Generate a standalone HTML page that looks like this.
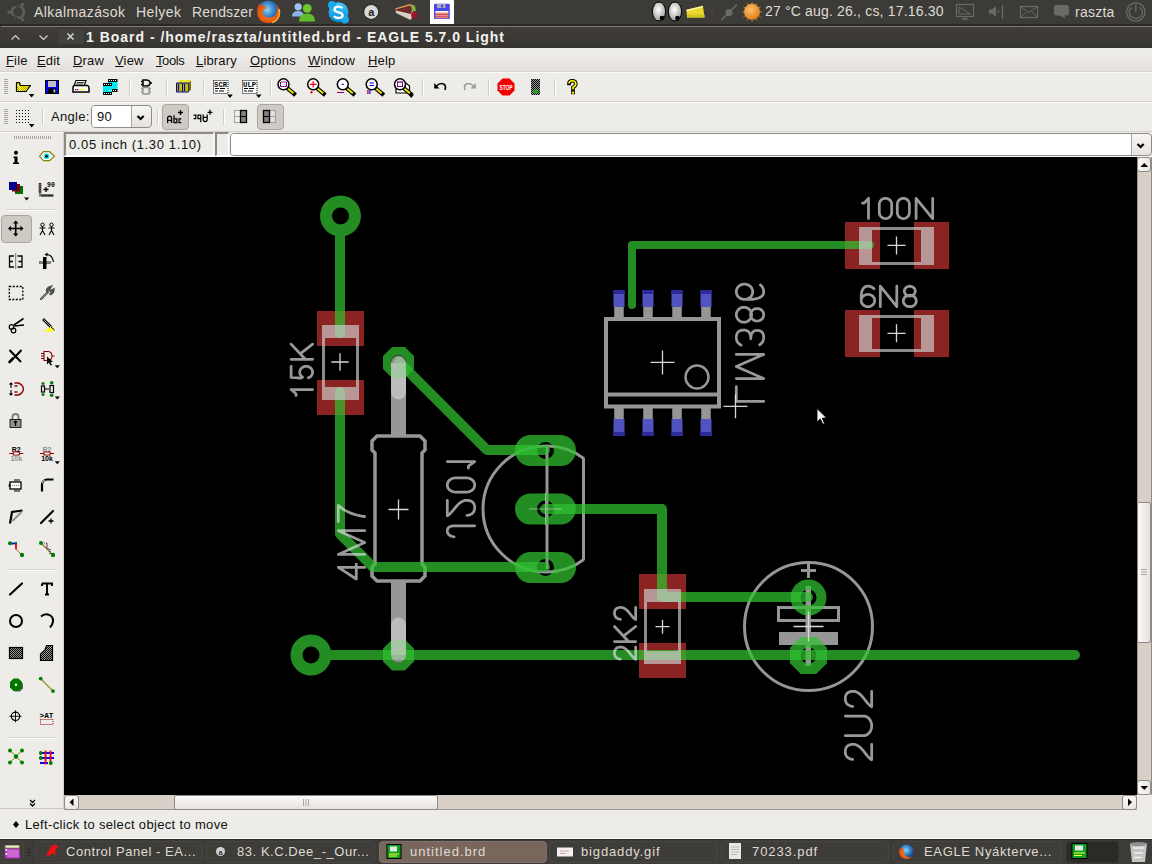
<!DOCTYPE html>
<html><head><meta charset="utf-8">
<style>
*{margin:0;padding:0;box-sizing:border-box}
html,body{width:1152px;height:864px;overflow:hidden;background:#edece8;font-family:"Liberation Sans",sans-serif;font-size:13px;color:#000}
.a{position:absolute}
.t{position:absolute;white-space:nowrap;line-height:13px}
.pt{color:#dfdbd2;font-size:14px;letter-spacing:0.42px}
.mt{font-size:13px;letter-spacing:0.15px;color:#101010}
.tt{color:#dfdbd2;font-size:13px;letter-spacing:0.55px}
.sep{position:absolute;width:2px;border-left:1px solid #c9c6c0;border-right:1px solid #fff}
.hsep{position:absolute;height:2px;border-top:1px solid #c9c6c0;border-bottom:1px solid #fff}
.task{position:absolute;top:841px;height:22px;border:1px solid #464541;border-radius:4px;background:#3e3d39}
</style></head><body>
<!-- ===== top panel ===== -->
<div class="a" style="left:0;top:0;width:1152px;height:24px;background:#3c3b37"></div>
<div class="t pt" style="left:34px;top:5.5px">Alkalmazások</div>
<div class="t pt" style="left:136px;top:5.5px">Helyek</div>
<div class="t pt" style="left:192px;top:5.5px;letter-spacing:0.15px">Rendszer</div>
<div class="t pt" style="left:765px;top:4.5px;letter-spacing:0.175px">27 °C aug. 26., cs, 17.16.30</div>
<div class="t pt" style="left:1075px;top:5.5px;letter-spacing:0.25px">raszta</div>
<!-- ===== title bar ===== -->
<div class="a" style="left:0;top:24px;width:1152px;height:2px;background:#2a2926"></div>
<div class="a" style="left:0;top:26px;width:1152px;height:1px;background:#7d7b76"></div><div class="a" style="left:0;top:26px;width:1px;height:1px;background:#3a3935"></div>
<div class="a" style="left:0;top:27px;width:1152px;height:21px;background:linear-gradient(#403d39,#3b3935 60%,#34332f)"></div>
<div class="t" style="left:86px;top:31px;font-weight:bold;font-size:14px;letter-spacing:0.985px;color:#f4f2ee">1 Board - /home/raszta/untitled.brd - EAGLE 5.7.0 Light</div>
<!-- ===== menu bar ===== -->
<div class="a" style="left:0;top:48px;width:1152px;height:24px;background:linear-gradient(#eeede9,#edebe7 40%,#e3e0db)"></div>
<div class="a" style="left:0;top:71px;width:1152px;height:1px;background:#d8d5cf"></div>
<div class="t mt" style="left:6px;top:54px"><u>F</u>ile</div>
<div class="t mt" style="left:37px;top:54px"><u>E</u>dit</div>
<div class="t mt" style="left:73px;top:54px"><u>D</u>raw</div>
<div class="t mt" style="left:115px;top:54px"><u>V</u>iew</div>
<div class="t mt" style="left:156px;top:54px;letter-spacing:-0.4px"><u>T</u>ools</div>
<div class="t mt" style="left:196px;top:54px"><u>L</u>ibrary</div>
<div class="t mt" style="left:250px;top:54px"><u>O</u>ptions</div>
<div class="t mt" style="left:308px;top:54px"><u>W</u>indow</div>
<div class="t mt" style="left:368px;top:54px"><u>H</u>elp</div>
<!-- ===== toolbars ===== -->
<div class="a" style="left:0;top:72px;width:1152px;height:1px;background:#fbfaf9"></div>
<div class="a" style="left:0;top:101px;width:1152px;height:1px;background:#d3d0ca"></div>
<div class="a" style="left:0;top:102px;width:1152px;height:1px;background:#fbfaf9"></div>
<div class="a" style="left:0;top:131px;width:1152px;height:1px;background:#d3d0ca"></div>
<div class="a" style="left:0;top:132px;width:63px;height:1px;background:#fbfaf9"></div>
<!-- pressed buttons -->
<div class="a" style="left:1px;top:215px;width:31px;height:28px;background:#cfcac4;border:1px solid #aaa59f;border-radius:4px"></div>
<div class="a" style="left:162px;top:104px;width:27px;height:26px;background:#cfcac4;border:1px solid #aaa59f;border-radius:4px"></div>
<div class="a" style="left:257px;top:104px;width:27px;height:26px;background:#cfcac4;border:1px solid #aaa59f;border-radius:4px"></div>
<!-- combobox angle -->
<div class="a" style="left:91px;top:105px;width:61px;height:23px;border:1px solid #8f8c87;border-radius:4px;background:linear-gradient(#f7f6f4,#e6e3df);overflow:hidden">
  <div class="a" style="left:0;top:0;width:40px;height:21px;background:#fff;border-right:1px solid #a9a6a1"></div>
</div>
<div class="t mt" style="left:97px;top:110px;letter-spacing:0.3px">90</div>
<!-- coordinate row -->
<div class="a" style="left:64px;top:132px;width:150px;height:24px;background:#edece8;border-top:2px solid #8e8b86;border-left:2px solid #8e8b86;border-right:1px solid #fff;border-bottom:1px solid #fff"></div>
<div class="t mt" style="left:69px;top:138px;letter-spacing:0.64px">0.05 inch (1.30 1.10)</div>
<div class="a" style="left:215px;top:132px;width:14px;height:24px;background:#edece8;border-top:2px solid #8e8b86;border-left:2px solid #8e8b86;border-right:1px solid #fff;border-bottom:1px solid #fff"></div>
<div class="a" style="left:230px;top:133px;width:922px;height:23px;border:1px solid #8f8c87;border-radius:4px;background:linear-gradient(#f7f6f4,#e6e3df);overflow:hidden">
  <div class="a" style="left:0;top:0;width:901px;height:21px;background:#fff;border-right:1px solid #a9a6a1"></div>
</div>
<div class="a" style="left:64px;top:156px;width:1088px;height:1px;background:#fbfaf9"></div>
<!-- left toolbar frame -->
<div class="a" style="left:63px;top:132px;width:1px;height:678px;background:#d6d3cd"></div>
<div class="a" style="left:0;top:808px;width:64px;height:1px;background:#c9c5bf"></div>
<!-- scrollbars -->
<div class="a" style="left:1137px;top:157px;width:15px;height:638px;background:#d8cfc7;border-left:1px solid #9e9790"></div>
<div class="a" style="left:1137px;top:157px;width:14px;height:15px;border:1px solid #8f8a84;border-radius:3px;background:linear-gradient(90deg,#fbfaf9,#e9e6e2)"></div>
<div class="a" style="left:1137px;top:780px;width:14px;height:15px;border:1px solid #8f8a84;border-radius:3px;background:linear-gradient(90deg,#fbfaf9,#e9e6e2)"></div>
<div class="a" style="left:1137px;top:502px;width:14px;height:141px;border:1px solid #8f8a84;border-radius:2px;background:linear-gradient(90deg,#fbfaf9,#e6e3de)"></div>
<div class="a" style="left:1151px;top:157px;width:1px;height:638px;background:#8f8a84"></div>
<div class="a" style="left:64px;top:795px;width:1073px;height:15px;background:#d8cfc7;border-bottom:1px solid #9e9790"></div>
<div class="a" style="left:64px;top:795px;width:15px;height:15px;border:1px solid #8f8a84;border-radius:3px;background:linear-gradient(#fbfaf9,#e9e6e2)"></div>
<div class="a" style="left:1122px;top:795px;width:15px;height:15px;border:1px solid #8f8a84;border-radius:3px;background:linear-gradient(#fbfaf9,#e9e6e2)"></div>
<div class="a" style="left:174px;top:795px;width:264px;height:15px;border:1px solid #8f8a84;border-radius:2px;background:linear-gradient(#fbfaf9,#e6e3de)"></div>

<div class="t mt" style="left:51px;top:110px;letter-spacing:0.3px">Angle:</div>
<!-- ===== canvas ===== -->
<svg class="a" style="left:64px;top:157px" width="1073" height="638" viewBox="64 157 1073 638">
<rect x="64" y="157" width="1073" height="638" fill="#000"/>
<rect x="317" y="311" width="47" height="35" fill="#8c2323"/>
<rect x="317" y="380" width="47" height="35" fill="#8c2323"/>
<rect x="639" y="574" width="47" height="35" fill="#8c2323"/>
<rect x="639" y="643" width="47" height="35" fill="#8c2323"/>
<rect x="845" y="222" width="35" height="47" fill="#8c2323"/>
<rect x="914" y="222" width="35" height="47" fill="#8c2323"/>
<rect x="845" y="310" width="35" height="47" fill="#8c2323"/>
<rect x="914" y="310" width="35" height="47" fill="#8c2323"/>
<rect x="613.5" y="290" width="11" height="17" fill="#5252c2"/>
<rect x="613.5" y="290" width="11" height="4" fill="#2b2b9c"/>
<rect x="613.5" y="419" width="11" height="17" fill="#5252c2"/>
<rect x="613.5" y="432" width="11" height="4" fill="#2b2b9c"/>
<rect x="614.25" y="307" width="9.5" height="10" fill="#969696"/>
<rect x="614.25" y="408" width="9.5" height="11" fill="#969696"/>
<rect x="642.5" y="290" width="11" height="17" fill="#5252c2"/>
<rect x="642.5" y="290" width="11" height="4" fill="#2b2b9c"/>
<rect x="642.5" y="419" width="11" height="17" fill="#5252c2"/>
<rect x="642.5" y="432" width="11" height="4" fill="#2b2b9c"/>
<rect x="643.25" y="307" width="9.5" height="10" fill="#969696"/>
<rect x="643.25" y="408" width="9.5" height="11" fill="#969696"/>
<rect x="671.5" y="290" width="11" height="17" fill="#5252c2"/>
<rect x="671.5" y="290" width="11" height="4" fill="#2b2b9c"/>
<rect x="671.5" y="419" width="11" height="17" fill="#5252c2"/>
<rect x="671.5" y="432" width="11" height="4" fill="#2b2b9c"/>
<rect x="672.25" y="307" width="9.5" height="10" fill="#969696"/>
<rect x="672.25" y="408" width="9.5" height="11" fill="#969696"/>
<rect x="700.5" y="290" width="11" height="17" fill="#5252c2"/>
<rect x="700.5" y="290" width="11" height="4" fill="#2b2b9c"/>
<rect x="700.5" y="419" width="11" height="17" fill="#5252c2"/>
<rect x="700.5" y="432" width="11" height="4" fill="#2b2b9c"/>
<rect x="701.25" y="307" width="9.5" height="10" fill="#969696"/>
<rect x="701.25" y="408" width="9.5" height="11" fill="#969696"/>
<rect x="606" y="319" width="113" height="87.5" fill="none" stroke="#969696" stroke-width="4"/>
<line x1="606" y1="394.5" x2="719" y2="394.5" stroke="#969696" stroke-width="4"/>
<circle cx="697" cy="377" r="11.5" fill="none" stroke="#969696" stroke-width="2.5"/>
<rect x="391" y="363" width="15" height="72" fill="#969696"/>
<rect x="391" y="581" width="15" height="74" fill="#969696"/>
<path d="M372,441 L377,436 L420,436 L425,441 L425,450 L422,453 L422,564 L425,567 L425,576 L420,581 L377,581 L372,576 L372,567 L375,564 L375,453 L372,450 Z" fill="none" stroke="#969696" stroke-width="3.5"/>
<clipPath id="tc"><rect x="400" y="400" width="184.5" height="220"/></clipPath>
<circle cx="546" cy="509" r="63" fill="none" stroke="#969696" stroke-width="3" clip-path="url(#tc)"/>
<line x1="583.5" y1="458" x2="583.5" y2="560" stroke="#969696" stroke-width="3"/>
<line x1="547" y1="446" x2="547" y2="569" stroke="#969696" stroke-width="3"/>
<circle cx="808.5" cy="626.5" r="64" fill="none" stroke="#969696" stroke-width="3"/>
<rect x="778.5" y="607.5" width="60" height="13" fill="none" stroke="#969696" stroke-width="3"/>
<rect x="779" y="632" width="59" height="13" fill="#969696"/>
<path d="M801,570.5 L816,570.5 M808.5,564 L808.5,578" stroke="#969696" stroke-width="3"/>
<rect x="805.5" y="586" width="5.5" height="80" fill="#969696"/>
<g fill="none" stroke="rgba(48,192,48,0.73)" stroke-width="10" stroke-linecap="round" stroke-linejoin="round"><path d="M340,230 L340,333 M340,392 L340,534 L373,567 L545,567" /><path d="M331,655 L1075,655" /><path d="M399,362 L487,450 L545,450" /><path d="M545,509 L662,509 L662,597 L808,597" /></g>
<path d="M632,305 L632,245 L870,245" fill="none" stroke="rgba(48,192,48,0.73)" stroke-width="8" stroke-linecap="round" stroke-linejoin="round"/>
<path d="M320.0,216 a20.5,20.5 0 1,0 41.0,0 a20.5,20.5 0 1,0 -41.0,0 Z M332.0,216 a8.5,8.5 0 1,1 17.0,0 a8.5,8.5 0 1,1 -17.0,0 Z" fill-rule="evenodd" fill="#238c23"/>
<path d="M290.5,655 a20.5,20.5 0 1,0 41.0,0 a20.5,20.5 0 1,0 -41.0,0 Z M302.5,655 a8.5,8.5 0 1,1 17.0,0 a8.5,8.5 0 1,1 -17.0,0 Z" fill-rule="evenodd" fill="#238c23"/>
<path d="M392.1,347.0 L404.9,347.0 L414.0,356.1 L414.0,368.9 L404.9,378.0 L392.1,378.0 L383.0,368.9 L383.0,356.1 Z M391.0,362.5 a7.5,7.5 0 1,1 15.0,0 a7.5,7.5 0 1,1 -15.0,0 Z" fill-rule="evenodd" fill="rgba(48,192,48,0.73)"/>
<path d="M392.1,639.5 L404.9,639.5 L414.0,648.6 L414.0,661.4 L404.9,670.5 L392.1,670.5 L383.0,661.4 L383.0,648.6 Z M391.0,655 a7.5,7.5 0 1,1 15.0,0 a7.5,7.5 0 1,1 -15.0,0 Z" fill-rule="evenodd" fill="rgba(48,192,48,0.73)"/>
<path d="M530.5,435.0 L560.5,435.0 A15.5,15.5 0 0,1 560.5,466.0 L530.5,466.0 A15.5,15.5 0 0,1 530.5,435.0 Z M537.0,450.5 a8.5,8.5 0 1,1 17.0,0 a8.5,8.5 0 1,1 -17.0,0 Z" fill-rule="evenodd" fill="rgba(48,192,48,0.73)"/>
<path d="M530.5,493.5 L560.5,493.5 A15.5,15.5 0 0,1 560.5,524.5 L530.5,524.5 A15.5,15.5 0 0,1 530.5,493.5 Z M537.0,509 a8.5,8.5 0 1,1 17.0,0 a8.5,8.5 0 1,1 -17.0,0 Z" fill-rule="evenodd" fill="rgba(48,192,48,0.73)"/>
<path d="M530.5,552.0 L560.5,552.0 A15.5,15.5 0 0,1 560.5,583.0 L530.5,583.0 A15.5,15.5 0 0,1 530.5,552.0 Z M537.0,567.5 a8.5,8.5 0 1,1 17.0,0 a8.5,8.5 0 1,1 -17.0,0 Z" fill-rule="evenodd" fill="rgba(48,192,48,0.73)"/>
<path d="M790.5,597.5 a18,18 0 1,0 36,0 a18,18 0 1,0 -36,0 Z M800.5,597.5 a8,8 0 1,1 16,0 a8,8 0 1,1 -16,0 Z" fill-rule="evenodd" fill="rgba(48,192,48,0.73)"/>
<path d="M800.8,637.0 L816.2,637.0 L827.0,647.8 L827.0,663.2 L816.2,674.0 L800.8,674.0 L790.0,663.2 L790.0,647.8 Z M800.5,655.5 a8,8 0 1,1 16,0 a8,8 0 1,1 -16,0 Z" fill-rule="evenodd" fill="rgba(48,192,48,0.73)"/>
<path d="M398.5,363 L398.5,392" stroke="rgba(207,207,207,0.67)" stroke-width="15" stroke-linecap="round"/>
<path d="M398.5,625 L398.5,655" stroke="rgba(207,207,207,0.67)" stroke-width="15" stroke-linecap="round"/>
<rect x="322" y="325" width="37" height="13" fill="rgba(207,207,207,0.67)"/>
<rect x="322" y="387" width="37" height="13" fill="rgba(207,207,207,0.67)"/>
<path d="M323.5,338 L323.5,387 M357.5,338 L357.5,387" stroke="rgba(207,207,207,0.67)" stroke-width="3"/>
<rect x="644" y="589" width="37" height="13" fill="rgba(207,207,207,0.67)"/>
<rect x="644" y="651" width="37" height="13" fill="rgba(207,207,207,0.67)"/>
<path d="M645.5,602 L645.5,651 M679.5,602 L679.5,651" stroke="rgba(207,207,207,0.67)" stroke-width="3"/>
<rect x="859" y="227" width="13" height="38" fill="rgba(207,207,207,0.67)"/>
<rect x="921" y="227" width="13" height="38" fill="rgba(207,207,207,0.67)"/>
<path d="M872,228.5 L921,228.5 M872,263.5 L921,263.5" stroke="rgba(207,207,207,0.67)" stroke-width="3"/>
<rect x="859" y="315" width="13" height="37" fill="rgba(207,207,207,0.67)"/>
<rect x="921" y="315" width="13" height="37" fill="rgba(207,207,207,0.67)"/>
<path d="M872,316.5 L921,316.5 M872,350.5 L921,350.5" stroke="rgba(207,207,207,0.67)" stroke-width="3"/>
<path d="M331.3,362 L348.7,362 M340,353.3 L340,370.7 M388.5,509.5 L408.5,509.5 M398.5,499.5 L398.5,519.5 M650.5,362.4 L674.5,362.4 M662.5,350.4 L662.5,374.4 M887.5,245.4 L905.5,245.4 M896.5,236.4 L896.5,254.4 M887.5,333.3 L905.5,333.3 M896.5,324.3 L896.5,342.3 M655.5,626.7 L669.5,626.7 M662.5,619.7 L662.5,633.7 M793.5,626.5 L823.5,626.5 M808.5,611.5 L808.5,641.5 M723.5,406.3 L747.5,406.3 M735.5,394.3 L735.5,418.3" stroke="#d8d8d8" stroke-width="1.3" fill="none"/>
<path d="M529,509 L562,509 M545.5,493 L545.5,525" stroke="rgba(220,220,220,0.55)" stroke-width="1.1" fill="none"/>
<path d="M862.5 203.0 L864.3 203.0 L868.5 198.3 L868.5 218.6 M879.3 204.4 L879.4 203.3 L879.7 202.3 L880.1 201.3 L880.8 200.5 L881.5 199.7 L882.4 199.1 L883.4 198.7 L884.4 198.4 L885.5 198.3 L886.6 198.4 L887.6 198.7 L888.6 199.1 L889.5 199.7 L890.2 200.5 L890.9 201.3 L891.3 202.3 L891.6 203.3 L891.7 204.4 L891.7 212.5 L891.6 213.6 L891.3 214.6 L890.9 215.6 L890.2 216.4 L889.5 217.2 L888.6 217.8 L887.6 218.2 L886.6 218.5 L885.5 218.6 L884.4 218.5 L883.4 218.2 L882.4 217.8 L881.5 217.2 L880.8 216.4 L880.1 215.6 L879.7 214.6 L879.4 213.6 L879.3 212.5 L879.3 204.4 M897.3 204.4 L897.4 203.3 L897.7 202.3 L898.1 201.3 L898.7 200.5 L899.5 199.7 L900.3 199.1 L901.3 198.7 L902.3 198.4 L903.3 198.3 L904.4 198.4 L905.4 198.7 L906.4 199.1 L907.2 199.7 L908.0 200.5 L908.6 201.3 L909.0 202.3 L909.3 203.3 L909.4 204.4 L909.4 212.5 L909.3 213.6 L909.0 214.6 L908.6 215.6 L908.0 216.4 L907.2 217.2 L906.4 217.8 L905.4 218.2 L904.4 218.5 L903.3 218.6 L902.3 218.5 L901.3 218.2 L900.3 217.8 L899.5 217.2 L898.7 216.4 L898.1 215.6 L897.7 214.6 L897.4 213.6 L897.3 212.5 L897.3 204.4 M916.1 218.6 L916.1 198.3 L932.7 218.6 L932.7 198.3 M874.0 288.7 L873.3 288.1 L872.6 287.6 L871.9 287.2 L871.2 286.8 L870.4 286.5 L869.6 286.4 L868.8 286.2 L868.0 286.2 L868.0 286.2 L866.4 286.4 L865.0 286.9 L863.8 287.8 L862.9 289.0 L862.1 290.6 L861.6 292.5 L861.3 294.8 L861.2 297.5 L861.2 300.6 L861.2 300.6 L861.3 299.5 L861.6 298.4 L862.1 297.5 L862.8 296.6 L863.6 295.8 L864.6 295.2 L865.6 294.8 L866.8 294.5 L868.0 294.4 L869.1 294.5 L870.3 294.8 L871.3 295.2 L872.3 295.8 L873.1 296.6 L873.8 297.5 L874.3 298.4 L874.6 299.5 L874.7 300.6 L874.6 301.6 L874.3 302.7 L873.8 303.6 L873.1 304.5 L872.3 305.3 L871.3 305.9 L870.3 306.3 L869.1 306.6 L868.0 306.7 L866.8 306.6 L865.6 306.3 L864.6 305.9 L863.6 305.3 L862.8 304.5 L862.1 303.6 L861.6 302.7 L861.3 301.6 L861.2 300.6 M880.3 306.7 L880.3 286.2 L896.8 306.7 L896.8 286.2 M909.8 296.0 L908.9 296.0 L907.9 295.7 L907.1 295.4 L906.3 294.9 L905.6 294.3 L905.1 293.6 L904.7 292.8 L904.4 292.0 L904.3 291.1 L904.4 290.3 L904.7 289.4 L905.1 288.7 L905.6 288.0 L906.3 287.4 L907.1 286.9 L907.9 286.5 L908.9 286.3 L909.8 286.2 L910.7 286.3 L911.7 286.5 L912.5 286.9 L913.3 287.4 L914.0 288.0 L914.5 288.7 L914.9 289.4 L915.2 290.3 L915.3 291.1 L915.2 292.0 L914.9 292.8 L914.5 293.6 L914.0 294.3 L913.3 294.9 L912.5 295.4 L911.7 295.7 L910.7 296.0 L909.8 296.0 M909.8 295.2 L910.9 295.3 L912.0 295.6 L913.0 296.0 L914.0 296.6 L914.8 297.3 L915.4 298.1 L915.9 299.0 L916.2 300.0 L916.3 301.0 L916.2 302.0 L915.9 302.9 L915.4 303.8 L914.8 304.6 L914.0 305.4 L913.0 305.9 L912.0 306.4 L910.9 306.6 L909.8 306.7 L908.7 306.6 L907.6 306.4 L906.5 305.9 L905.6 305.4 L904.8 304.6 L904.2 303.8 L903.7 302.9 L903.4 302.0 L903.3 301.0 L903.4 300.0 L903.7 299.0 L904.2 298.1 L904.8 297.3 L905.6 296.6 L906.5 296.0 L907.6 295.6 L908.7 295.3 L909.8 295.2 M296.0 395.5 L296.0 393.7 L291.1 389.5 L312.6 389.5 M291.1 366.3 L291.1 377.5 L301.0 378.2 L302.5 377.1 L301.6 376.4 L300.8 375.6 L300.3 374.7 L299.9 373.6 L299.7 372.6 L299.8 371.5 L300.0 370.5 L300.4 369.5 L301.1 368.6 L301.9 367.8 L302.8 367.2 L303.9 366.7 L305.0 366.4 L306.2 366.3 L306.2 366.3 L307.3 366.4 L308.4 366.7 L309.4 367.1 L310.3 367.7 L311.1 368.4 L311.7 369.3 L312.2 370.2 L312.5 371.2 L312.6 372.2 L312.5 373.3 L312.2 374.3 L311.7 375.2 L311.1 376.1 L310.3 376.8 L309.4 377.4 L308.4 377.8 M291.1 359.3 L312.6 359.3 M291.1 344.1 L305.3 359.3 M300.1 353.8 L312.6 344.1 M620.4 659.2 L619.0 658.9 L617.8 658.5 L616.8 657.9 L616.0 657.2 L615.3 656.4 L614.9 655.4 L614.6 654.3 L614.5 653.0 L614.5 653.0 L614.6 651.6 L614.9 650.4 L615.4 649.4 L616.1 648.6 L617.0 647.9 L618.1 647.5 L619.4 647.2 L620.9 647.1 L620.9 647.1 L621.9 647.2 L623.0 647.5 L624.1 648.0 L625.2 648.6 L626.3 649.5 L627.5 650.6 L628.6 651.8 L629.8 653.2 L629.8 653.2 L630.8 654.6 L631.7 655.7 L632.6 656.7 L633.4 657.6 L634.1 658.2 L634.7 658.8 L635.2 659.2 L635.7 659.4 L635.7 647.1 M614.5 641.5 L635.7 641.5 M614.5 626.5 L628.5 641.5 M623.4 636.1 L635.7 626.5 M620.4 619.3 L619.0 619.0 L617.8 618.6 L616.8 618.1 L616.0 617.4 L615.3 616.6 L614.9 615.6 L614.6 614.5 L614.5 613.2 L614.5 613.2 L614.6 611.8 L614.9 610.7 L615.4 609.7 L616.1 608.9 L617.0 608.2 L618.1 607.8 L619.4 607.5 L620.9 607.4 L620.9 607.4 L621.9 607.5 L623.0 607.8 L624.1 608.3 L625.2 608.9 L626.3 609.8 L627.5 610.8 L628.6 612.0 L629.8 613.5 L629.8 613.5 L630.8 614.7 L631.7 615.9 L632.6 616.9 L633.4 617.7 L634.1 618.4 L634.7 618.9 L635.2 619.3 L635.7 619.5 L635.7 607.4 M364.7 567.4 L338.3 567.4 L356.3 579.0 L356.3 564.2 M364.7 554.4 L338.3 554.4 L364.7 542.5 L338.3 530.7 L364.7 530.7 M338.3 521.5 L338.3 505.3 L338.3 505.3 L340.7 507.4 L343.4 509.4 L346.3 511.1 L349.5 512.6 L352.9 513.9 L356.6 515.0 L360.5 515.9 L364.7 516.6 M852.7 759.4 L851.0 759.1 L849.5 758.6 L848.2 757.9 L847.1 757.0 L846.3 756.0 L845.8 754.7 L845.4 753.3 L845.3 751.7 L845.3 751.7 L845.4 750.0 L845.8 748.5 L846.4 747.2 L847.3 746.1 L848.4 745.3 L849.8 744.8 L851.4 744.4 L853.2 744.3 L853.2 744.3 L854.5 744.4 L855.9 744.8 L857.3 745.4 L858.6 746.2 L860.0 747.3 L861.4 748.6 L862.9 750.2 L864.3 752.0 L864.3 752.0 L865.6 753.6 L866.8 755.1 L867.8 756.3 L868.8 757.4 L869.7 758.3 L870.4 758.9 L871.1 759.4 L871.7 759.7 L871.7 744.3 M845.3 735.7 L863.3 735.7 L863.3 735.7 L864.7 735.6 L866.1 735.1 L867.5 734.4 L868.7 733.4 L869.7 732.2 L870.6 730.8 L871.2 729.2 L871.6 727.6 L871.7 725.9 L871.6 724.1 L871.2 722.5 L870.6 720.9 L869.7 719.5 L868.7 718.3 L867.5 717.3 L866.1 716.6 L864.7 716.1 L863.3 716.0 L845.3 716.0 M852.7 706.4 L851.0 706.1 L849.5 705.6 L848.2 704.9 L847.1 704.0 L846.3 703.0 L845.8 701.7 L845.4 700.3 L845.3 698.7 L845.3 698.7 L845.4 697.0 L845.8 695.5 L846.4 694.2 L847.3 693.1 L848.4 692.3 L849.8 691.8 L851.4 691.4 L853.2 691.3 L853.2 691.3 L854.5 691.4 L855.9 691.8 L857.3 692.4 L858.6 693.2 L860.0 694.3 L861.4 695.6 L862.9 697.2 L864.3 699.0 L864.3 699.0 L865.6 700.6 L866.8 702.1 L867.8 703.3 L868.8 704.4 L869.7 705.3 L870.4 705.9 L871.1 706.4 L871.7 706.7 L871.7 691.3 M763.7 401.4 L736.3 401.4 L736.3 386.6 M736.3 378.5 L763.7 378.5 L736.3 366.4 L763.7 354.4 L736.3 354.4 M759.6 344.8 L760.6 344.1 L761.4 343.3 L762.1 342.5 L762.7 341.7 L763.1 340.7 L763.4 339.7 L763.6 338.7 L763.7 337.6 L763.7 337.6 L763.6 335.9 L763.3 334.5 L762.8 333.2 L762.1 332.2 L761.1 331.4 L760.0 330.9 L758.7 330.5 L757.1 330.4 L757.1 330.4 L755.6 330.5 L754.4 330.9 L753.3 331.6 L752.4 332.5 L751.7 333.7 L751.2 335.1 L750.9 336.8 L750.8 338.8 M750.8 338.8 L750.7 336.8 L750.4 335.0 L749.8 333.5 L749.0 332.3 L748.0 331.3 L746.8 330.6 L745.4 330.2 L743.7 330.1 L743.7 330.1 L742.0 330.2 L740.5 330.6 L739.2 331.2 L738.1 332.0 L737.3 333.0 L736.8 334.3 L736.4 335.8 L736.3 337.6 L736.3 337.6 L736.4 338.9 L736.6 340.0 L737.0 341.1 L737.5 342.1 L738.2 343.0 L739.1 343.8 L740.1 344.5 L741.2 345.1 M750.5 314.8 L750.6 315.8 L750.9 316.9 L751.4 317.9 L752.1 318.8 L752.9 319.5 L753.8 320.2 L754.9 320.6 L756.0 320.9 L757.1 321.0 L758.3 320.9 L759.4 320.6 L760.4 320.2 L761.4 319.5 L762.2 318.8 L762.8 317.9 L763.3 316.9 L763.6 315.8 L763.7 314.8 L763.6 313.7 L763.3 312.6 L762.8 311.6 L762.2 310.7 L761.4 310.0 L760.4 309.3 L759.4 308.9 L758.3 308.6 L757.1 308.5 L756.0 308.6 L754.9 308.9 L753.8 309.3 L752.9 310.0 L752.1 310.7 L751.4 311.6 L750.9 312.6 L750.6 313.7 L750.5 314.8 M751.6 314.8 L751.5 313.5 L751.2 312.2 L750.6 311.0 L749.8 310.0 L748.9 309.0 L747.8 308.3 L746.6 307.7 L745.3 307.4 L744.0 307.3 L742.6 307.4 L741.3 307.7 L740.1 308.3 L739.0 309.0 L738.1 310.0 L737.3 311.0 L736.8 312.2 L736.4 313.5 L736.3 314.8 L736.4 316.0 L736.8 317.3 L737.3 318.5 L738.1 319.5 L739.0 320.5 L740.1 321.2 L741.3 321.8 L742.6 322.1 L744.0 322.2 L745.3 322.1 L746.6 321.8 L747.8 321.2 L748.9 320.5 L749.8 319.5 L750.6 318.5 L751.2 317.3 L751.5 316.0 L751.6 314.8 M760.4 284.9 L761.2 285.6 L761.9 286.4 L762.4 287.3 L762.9 288.1 L763.2 289.0 L763.5 289.9 L763.6 290.8 L763.7 291.8 L763.7 291.8 L763.5 293.5 L762.8 295.1 L761.6 296.4 L759.9 297.5 L757.8 298.3 L755.2 298.9 L752.2 299.3 L748.6 299.4 L744.5 299.4 L744.5 299.4 L745.9 299.3 L747.3 298.9 L748.6 298.4 L749.8 297.6 L750.8 296.7 L751.6 295.6 L752.2 294.4 L752.6 293.1 L752.7 291.8 L752.6 290.4 L752.2 289.1 L751.6 287.9 L750.8 286.8 L749.8 285.9 L748.6 285.1 L747.3 284.6 L745.9 284.2 L744.5 284.1 L743.1 284.2 L741.7 284.6 L740.4 285.1 L739.2 285.9 L738.2 286.8 L737.4 287.9 L736.8 289.1 L736.4 290.4 L736.3 291.8 L736.4 293.1 L736.8 294.4 L737.4 295.6 L738.2 296.7 L739.2 297.6 L740.4 298.4 L741.7 298.9 L743.1 299.3 L744.5 299.4 M474.7 525.8 L455.0 525.8 L455.0 525.8 L453.2 525.9 L451.6 526.1 L450.3 526.5 L449.2 527.1 L448.4 527.8 L447.8 528.6 L447.4 529.7 L447.3 530.8 L447.3 530.8 L447.4 532.0 L447.7 533.1 L448.3 534.0 L449.0 534.8 L450.0 535.5 L451.2 536.1 L452.5 536.5 L454.1 536.8 M467.0 515.4 L468.8 515.1 L470.4 514.6 L471.7 513.9 L472.8 513.0 L473.6 512.0 L474.2 510.7 L474.6 509.3 L474.7 507.7 L474.7 507.7 L474.6 506.0 L474.2 504.5 L473.5 503.2 L472.6 502.1 L471.5 501.3 L470.1 500.8 L468.4 500.4 L466.5 500.3 L466.5 500.3 L465.1 500.4 L463.7 500.8 L462.3 501.4 L460.9 502.2 L459.4 503.3 L458.0 504.6 L456.5 506.2 L455.0 508.0 L455.0 508.0 L453.7 509.6 L452.4 511.1 L451.3 512.3 L450.3 513.4 L449.4 514.3 L448.6 514.9 L447.9 515.4 L447.3 515.7 L447.3 500.3 M466.5 492.1 L467.9 492.0 L469.3 491.7 L470.6 491.1 L471.8 490.4 L472.8 489.6 L473.6 488.6 L474.2 487.4 L474.6 486.2 L474.7 485.0 L474.6 483.8 L474.2 482.6 L473.6 481.5 L472.8 480.4 L471.8 479.6 L470.6 478.9 L469.3 478.3 L467.9 478.0 L466.5 477.9 L455.5 477.9 L454.1 478.0 L452.7 478.3 L451.4 478.9 L450.2 479.6 L449.2 480.4 L448.4 481.5 L447.8 482.6 L447.4 483.8 L447.3 485.0 L447.4 486.2 L447.8 487.4 L448.4 488.6 L449.2 489.6 L450.2 490.4 L451.4 491.1 L452.7 491.7 L454.1 492.0 L455.5 492.1 L466.5 492.1 M468.4 468.0 L468.4 466.1 L474.7 461.6 L447.3 461.6" fill="none" stroke="rgba(226,226,226,0.68)" stroke-width="2.75" stroke-linecap="round" stroke-linejoin="round"/>
<path d="M817,408.5 L817,422 L820.3,419 L822.8,424.3 L824.6,423.6 L822.3,418.2 L826.5,417.8 Z" fill="#f4f4f4" stroke="#000" stroke-width="0.8"/>
</svg>
<!-- ===== status ===== -->
<div class="t mt" style="left:25px;top:818px;letter-spacing:0.33px">Left-click to select object to move</div>
<!-- ===== taskbar ===== -->
<div class="a" style="left:0;top:838px;width:1152px;height:1px;background:#fbfaf9"></div>
<div class="a" style="left:0;top:839px;width:1152px;height:25px;background:#3c3b37"></div>
<div class="a" style="left:0;top:839px;width:1152px;height:1px;background:#2c2b28"></div>
<div class="task" style="left:1px;width:23px;top:841px;height:22px"></div>
<div class="task" style="left:35px;width:168px"></div>
<div class="task" style="left:206px;width:169px"></div>
<div class="task" style="left:379px;width:168px;background:#78665c;border-color:#80706a"></div>
<div class="task" style="left:549px;width:169px"></div>
<div class="task" style="left:721px;width:168px"></div>
<div class="task" style="left:893px;width:169px"></div>
<div class="task" style="left:1066px;width:53px;background:#2b2a27;border-color:#33322e"></div>
<div class="t tt" style="left:66px;top:845px">Control Panel - EA...</div>
<div class="t tt" style="left:237px;top:845px">83. K.C.Dee_-_Our...</div>
<div class="t tt" style="left:410px;top:845px;letter-spacing:1.0px">untitled.brd</div>
<div class="t tt" style="left:581px;top:845px;letter-spacing:0.85px">bigdaddy.gif</div>
<div class="t tt" style="left:752px;top:845px;letter-spacing:0.92px">70233.pdf</div>
<div class="t tt" style="left:924px;top:845px;letter-spacing:0.65px">EAGLE Nyákterve...</div>
<svg class="a" style="left:0;top:0" width="1152" height="864">
<defs><pattern id="chk" width="2" height="2" patternUnits="userSpaceOnUse"><rect width="2" height="2" fill="#fff"/><rect width="1" height="1" fill="#000"/><rect x="1" y="1" width="1" height="1" fill="#000"/></pattern><pattern id="chky" width="2" height="2" patternUnits="userSpaceOnUse"><rect width="2" height="2" fill="#ffff00"/><rect width="1" height="1" fill="#b0a000"/><rect x="1" y="1" width="1" height="1" fill="#b0a000"/></pattern><pattern id="chkg" width="2" height="2" patternUnits="userSpaceOnUse"><rect width="2" height="2" fill="#9a9a9a"/><rect width="1" height="1" fill="#000"/><rect x="1" y="1" width="1" height="1" fill="#000"/></pattern></defs>
<rect x="4" y="79" width="4" height="1" fill="#a9a6a0"/>
<rect x="4" y="81" width="4" height="1" fill="#a9a6a0"/>
<rect x="4" y="83" width="4" height="1" fill="#a9a6a0"/>
<rect x="4" y="85" width="4" height="1" fill="#a9a6a0"/>
<rect x="4" y="87" width="4" height="1" fill="#a9a6a0"/>
<rect x="4" y="89" width="4" height="1" fill="#a9a6a0"/>
<rect x="4" y="91" width="4" height="1" fill="#a9a6a0"/>
<rect x="4" y="93" width="4" height="1" fill="#a9a6a0"/>
<path d="M16.5,83 L16.5,91.5 L26,91.5 L30.5,85.5 L20,85.5 L20,83.5 L19,82.5 L17,82.5 Z" fill="url(#chky)" stroke="#000" stroke-width="1.2" stroke-linejoin="round"/>
<path d="M17,86 L20,86 L20,91" fill="none" stroke="#ffff80" stroke-width="1"/>
<path d="M28.8,94.1 L34.4,94.1 L31.6,97.4 Z" fill="#000"/>
<rect x="45" y="80" width="14" height="14" fill="#000"/><rect x="46" y="81" width="12" height="12" fill="#0000ee"/><rect x="48" y="81" width="8" height="6" fill="#c0c0c0"/><rect x="48" y="88.5" width="8" height="4.5" fill="#000"/><rect x="53.5" y="89.5" width="1.8" height="3" fill="#c0c0c0"/>
<path d="M76,80.5 L86,80.5 L84,86 L74,86 Z" fill="#fff" stroke="#000" stroke-width="1.2"/>
<path d="M74,85.5 L87.5,85.5 Q89,86 89,88 L89,92 L73,92 L73,88 Q73,86 74,85.5 Z" fill="#fff" stroke="#000" stroke-width="1.5"/>
<rect x="75" y="89" width="1.5" height="1.2" fill="#0000ff"/><rect x="77" y="89" width="1.5" height="1.2" fill="#ff0000"/><rect x="79.5" y="89" width="5" height="1.2" fill="#ffff00"/><path d="M77,82.5 L84,82.5 M76,84 L83,84" stroke="#000" stroke-width="0.8"/>
<rect x="108" y="79" width="9.5" height="3" fill="#000"/><rect x="108" y="82" width="9.5" height="7" fill="#00e8f0"/><rect x="108" y="89" width="9.5" height="3" fill="#000"/>
<rect x="103" y="83" width="9" height="3" fill="#000"/><rect x="103" y="86" width="9" height="6" fill="#00e8f0"/><rect x="103" y="92" width="9" height="3" fill="#000"/>
<rect x="104" y="84" width="1" height="1" fill="#fff"/><rect x="104" y="93" width="1" height="1" fill="#fff"/>
<rect x="106" y="84" width="1" height="1" fill="#fff"/><rect x="106" y="93" width="1" height="1" fill="#fff"/>
<rect x="108" y="84" width="1" height="1" fill="#fff"/><rect x="108" y="93" width="1" height="1" fill="#fff"/>
<rect x="110" y="84" width="1" height="1" fill="#fff"/><rect x="110" y="93" width="1" height="1" fill="#fff"/>
<rect x="109" y="80" width="1" height="1" fill="#fff"/><rect x="109" y="90" width="1" height="1" fill="#fff"/>
<rect x="111" y="80" width="1" height="1" fill="#fff"/><rect x="111" y="90" width="1" height="1" fill="#fff"/>
<rect x="113" y="80" width="1" height="1" fill="#fff"/><rect x="113" y="90" width="1" height="1" fill="#fff"/>
<rect x="115" y="80" width="1" height="1" fill="#fff"/><rect x="115" y="90" width="1" height="1" fill="#fff"/>
<rect x="129" y="79" width="1" height="16" fill="#cfccc6"/><rect x="130" y="79" width="1" height="16" fill="#fff"/>
<rect x="166" y="79" width="1" height="16" fill="#cfccc6"/><rect x="167" y="79" width="1" height="16" fill="#fff"/>
<rect x="203" y="79" width="1" height="16" fill="#cfccc6"/><rect x="204" y="79" width="1" height="16" fill="#fff"/>
<rect x="270" y="79" width="1" height="16" fill="#cfccc6"/><rect x="271" y="79" width="1" height="16" fill="#fff"/>
<rect x="422" y="79" width="1" height="16" fill="#cfccc6"/><rect x="423" y="79" width="1" height="16" fill="#fff"/>
<rect x="488" y="79" width="1" height="16" fill="#cfccc6"/><rect x="489" y="79" width="1" height="16" fill="#fff"/>
<rect x="554" y="79" width="1" height="16" fill="#cfccc6"/><rect x="555" y="79" width="1" height="16" fill="#fff"/>
<path d="M143,80 L146,80 Q150,80 150,83 Q150,86 146,86 L143,86 Z M141,81.5 L143,81.5 M141,84.5 L143,84.5 M150,83 L152,83" fill="none" stroke="#000" stroke-width="1.5"/>
<path d="M143,87.5 L149,87.5 L149,94 L143,94 Z M141,89 L143,89 M141,92 L143,92 M149,89 L151,89 M149,92 L151,92" fill="none" stroke="#909090" stroke-width="1.3"/>
<path d="M177,83 L180,80 L185,80 L182,83 Z" fill="#e8e800"/><path d="M183,83 L186,80 L191,80 L188,83 Z" fill="#e8e800"/>
<path d="M176.5,83 L182.5,83 L182.5,92 L176.5,92 Z" fill="#c0c000" stroke="#0000a0" stroke-width="1"/><path d="M182.5,83 L188.5,83 L188.5,92 L182.5,92 Z" fill="#c0c000" stroke="#0000a0" stroke-width="1"/>
<path d="M188.5,83 L191,80.5 L191,89.5 L188.5,92 Z" fill="#707000"/><path d="M178.5,84 L178.5,91 M184.5,84 L184.5,91" stroke="#0000c0" stroke-width="1.2"/>
<rect x="213" y="80" width="15" height="14" fill="#fff"/>
<path d="M213.5,80.5 L228,80.5 L228,94 M213.5,80.5 L213.5,93.5 L228,93.5" fill="none" stroke="#000" stroke-width="1" stroke-dasharray="1,1"/>
<text x="220.6" y="86.6" font-family="Liberation Mono" font-weight="bold" font-size="7.2" text-anchor="middle" fill="#000" textLength="13" lengthAdjust="spacingAndGlyphs">SCR</text>
<path d="M215,88.5 L219,88.5 M220,88.5 L225,88.5 M215,91 L218,91 M219,91 L224,91" stroke="#000" stroke-width="1"/>
<path d="M227.2,94.6 L232.8,94.6 L230,97.9 Z" fill="#000"/>
<rect x="242" y="80" width="15" height="14" fill="#fff"/>
<path d="M242.5,80.5 L257,80.5 L257,94 M242.5,80.5 L242.5,93.5 L257,93.5" fill="none" stroke="#000" stroke-width="1" stroke-dasharray="1,1"/>
<text x="249.6" y="86.6" font-family="Liberation Mono" font-weight="bold" font-size="7.2" text-anchor="middle" fill="#000" textLength="13" lengthAdjust="spacingAndGlyphs">ULP</text>
<path d="M244,88.5 L248,88.5 M249,88.5 L254,88.5 M244,91 L247,91 M248,91 L253,91" stroke="#000" stroke-width="1"/>
<path d="M255.89999999999998,94.6 L261.5,94.6 L258.7,97.9 Z" fill="#000"/>
<path d="M287.5,88.3 L294.0,93.8" stroke="#000" stroke-width="4.2" stroke-linecap="square"/><path d="M288.0,88.8 L293.5,93.3" stroke="#e8e800" stroke-width="2"/>
<circle cx="283.5" cy="84.3" r="5.5" fill="#fff" stroke="#000" stroke-width="1.5"/>
<rect x="280.5" y="82" width="6" height="4.5" fill="none" stroke="#ff0000" stroke-width="1" stroke-dasharray="1,1"/><rect x="280.5" y="82" width="6" height="4.5" fill="none" stroke="#0000ff" stroke-width="1" stroke-dasharray="1,1" stroke-dashoffset="1"/>
<path d="M317.2,88.3 L323.7,93.8" stroke="#000" stroke-width="4.2" stroke-linecap="square"/><path d="M317.7,88.8 L323.2,93.3" stroke="#e8e800" stroke-width="2"/>
<circle cx="313.2" cy="84.3" r="5.5" fill="#fff" stroke="#000" stroke-width="1.5"/>
<path d="M310,84.3 L316.5,84.3 M313.2,81 L313.2,87.5" stroke="#ff0000" stroke-width="1.2"/><path d="M310,92.3 L313,92.3 M311.5,91 L311.5,93.5" stroke="#ff0000" stroke-width="1"/>
<path d="M346.8,88.3 L353.3,93.8" stroke="#000" stroke-width="4.2" stroke-linecap="square"/><path d="M347.3,88.8 L352.8,93.3" stroke="#e8e800" stroke-width="2"/>
<circle cx="342.8" cy="84.3" r="5.5" fill="#fff" stroke="#000" stroke-width="1.5"/>
<path d="M341.5,84.3 L344,84.3" stroke="#0000ff" stroke-width="1"/><path d="M337,92.5 L344,92.5" stroke="#ff0000" stroke-width="1" stroke-dasharray="1,1"/><path d="M337,92.5 L344,92.5" stroke="#0000ff" stroke-width="1" stroke-dasharray="1,1" stroke-dashoffset="1"/>
<path d="M375.7,88.3 L382.2,93.8" stroke="#000" stroke-width="4.2" stroke-linecap="square"/><path d="M376.2,88.8 L381.7,93.3" stroke="#e8e800" stroke-width="2"/>
<circle cx="371.7" cy="84.3" r="5.5" fill="#fff" stroke="#000" stroke-width="1.5"/>
<path d="M369.5,83 L374,83 M369.5,85.5 L374,85.5" stroke="#0000ff" stroke-width="1"/><path d="M367,91 L371,91 M367,93 L371,93" stroke="#0000ff" stroke-width="1"/><path d="M367,91 L371,91 M367,93 L371,93" stroke="#ff0000" stroke-width="1" stroke-dasharray="1,1"/>
<path d="M396,83 L406,83 L409.5,86 L409.5,93 L396,93 Z" fill="#fff" stroke="#000" stroke-width="1.2"/>
<path d="M404,88.3 L410.5,93.8" stroke="#000" stroke-width="4.2" stroke-linecap="square"/><path d="M404.5,88.8 L410,93.3" stroke="#e8e800" stroke-width="2"/>
<circle cx="400" cy="84.3" r="5.5" fill="#fff" stroke="#000" stroke-width="1.5"/>
<rect x="397.5" y="82" width="5" height="4.5" fill="none" stroke="#0000ff" stroke-width="1"/><rect x="397.5" y="82" width="5" height="4.5" fill="none" stroke="#ff0000" stroke-width="1" stroke-dasharray="1,1"/>
<path d="M408.5,94.6 L414.1,94.6 L411.3,97.9 Z" fill="#000"/>
<path d="M436.5,86 Q440,82.5 443.5,84 Q446.5,85.5 445,90" fill="none" stroke="#000" stroke-width="1.6"/><path d="M434.2,83 L434.2,88.5 L439.5,88.5 Z" fill="#000"/>
<path d="M473.5,86 Q470,82.5 466.5,84 Q463.5,85.5 465,90" fill="none" stroke="#9a9a9a" stroke-width="1.6"/><path d="M475.8,83 L475.8,88.5 L470.5,88.5 Z" fill="#9a9a9a"/>
<path d="M502.5,78.5 L509.5,78.5 L514.5,83.5 L514.5,90.5 L509.5,95.5 L502.5,95.5 L497.5,90.5 L497.5,83.5 Z" fill="#f00000"/>
<text x="506" y="90" font-family="Liberation Sans" font-weight="bold" font-size="7.5" text-anchor="middle" fill="#fff" textLength="13" lengthAdjust="spacingAndGlyphs">STOP</text>
<rect x="531" y="79" width="9" height="16" fill="url(#chkg)"/><circle cx="535.5" cy="91.5" r="2" fill="#00c000"/>
<path d="M569,83.5 Q569,80.8 572.2,80.8 Q575.8,80.8 575.8,83.8 Q575.8,86 573,87.3 L573,89.5" fill="none" stroke="#000" stroke-width="3.6" stroke-linecap="square"/><path d="M569,83.5 Q569,80.8 572.2,80.8 Q575.8,80.8 575.8,83.8 Q575.8,86 573,87.3 L573,89.5" fill="none" stroke="#ffff00" stroke-width="1.6"/>
<rect x="571" y="91" width="4" height="3.2" fill="#000"/><rect x="571.8" y="91.6" width="2.4" height="2" fill="#ffff00"/>
<rect x="4" y="109" width="4" height="1" fill="#a9a6a0"/>
<rect x="4" y="111" width="4" height="1" fill="#a9a6a0"/>
<rect x="4" y="113" width="4" height="1" fill="#a9a6a0"/>
<rect x="4" y="115" width="4" height="1" fill="#a9a6a0"/>
<rect x="4" y="117" width="4" height="1" fill="#a9a6a0"/>
<rect x="4" y="119" width="4" height="1" fill="#a9a6a0"/>
<rect x="4" y="121" width="4" height="1" fill="#a9a6a0"/>
<rect x="4" y="123" width="4" height="1" fill="#a9a6a0"/>
<rect x="16" y="110" width="1" height="1" fill="#000"/>
<rect x="19" y="110" width="1" height="1" fill="#000"/>
<rect x="22" y="110" width="1" height="1" fill="#000"/>
<rect x="25" y="110" width="1" height="1" fill="#000"/>
<rect x="28" y="110" width="1" height="1" fill="#000"/>
<rect x="16" y="113" width="1" height="1" fill="#000"/>
<rect x="19" y="113" width="1" height="1" fill="#000"/>
<rect x="22" y="113" width="1" height="1" fill="#000"/>
<rect x="25" y="113" width="1" height="1" fill="#000"/>
<rect x="28" y="113" width="1" height="1" fill="#000"/>
<rect x="16" y="116" width="1" height="1" fill="#000"/>
<rect x="19" y="116" width="1" height="1" fill="#000"/>
<rect x="22" y="116" width="1" height="1" fill="#000"/>
<rect x="25" y="116" width="1" height="1" fill="#000"/>
<rect x="28" y="116" width="1" height="1" fill="#000"/>
<rect x="16" y="119" width="1" height="1" fill="#000"/>
<rect x="19" y="119" width="1" height="1" fill="#000"/>
<rect x="22" y="119" width="1" height="1" fill="#000"/>
<rect x="25" y="119" width="1" height="1" fill="#000"/>
<rect x="28" y="119" width="1" height="1" fill="#000"/>
<rect x="16" y="122" width="1" height="1" fill="#000"/>
<rect x="19" y="122" width="1" height="1" fill="#000"/>
<rect x="22" y="122" width="1" height="1" fill="#000"/>
<rect x="25" y="122" width="1" height="1" fill="#000"/>
<rect x="28" y="122" width="1" height="1" fill="#000"/>
<path d="M28.9,124.1 L34.5,124.1 L31.7,127.4 Z" fill="#000"/>
<rect x="42" y="109" width="1" height="16" fill="#cfccc6"/><rect x="43" y="109" width="1" height="16" fill="#fff"/>
<rect x="157" y="109" width="1" height="16" fill="#cfccc6"/><rect x="158" y="109" width="1" height="16" fill="#fff"/>
<rect x="223" y="109" width="1" height="16" fill="#cfccc6"/><rect x="224" y="109" width="1" height="16" fill="#fff"/>
<path d="M137.5,116 L140.6,119 L143.7,116" fill="none" stroke="#000" stroke-width="2.2"/>
<path d="M1137.5,144 L1140.6,147 L1143.7,144" fill="none" stroke="#000" stroke-width="2.2"/>
<path d="M167.6,123 L167.6,118.3 Q167.6,116 169.6,116 Q171.6,116 171.6,118.3 L171.6,123 M167.6,120.3 L171.6,120.3 M174,115.3 L174,122.6 L176.8,122.6 L176.8,118.9 L174,118.9 M181.3,118.9 L179,118.9 L179,122.6 L181.3,122.6" fill="none" stroke="#000" stroke-width="1.25"/><path d="M178,112.5 L183,112.5 M180.5,110 L180.5,115" stroke="#000" stroke-width="1.3"/>
<g transform="translate(374.8,237.6) rotate(180)"><path d="M167.6,123 L167.6,118.3 Q167.6,116 169.6,116 Q171.6,116 171.6,118.3 L171.6,123 M167.6,120.3 L171.6,120.3 M174,115.3 L174,122.6 L176.8,122.6 L176.8,118.9 L174,118.9 M181.3,118.9 L179,118.9 L179,122.6 L181.3,122.6" fill="none" stroke="#000" stroke-width="1.25"/></g><path d="M207.5,112.3 L212.5,112.3 M210,109.8 L210,114.8" stroke="#000" stroke-width="1.3"/>
<rect x="234.5" y="110.5" width="6" height="6" fill="#f0f0f0" stroke="#a0a0a0"/><rect x="234.5" y="116.5" width="6" height="6" fill="#f0f0f0" stroke="#a0a0a0"/><rect x="240.5" y="110.5" width="6" height="12" fill="#808080" stroke="#000" stroke-width="1.3"/><path d="M240.5,116.5 L246.5,116.5" stroke="#000"/>
<rect x="269.5" y="110.5" width="6" height="6" fill="#e0e0e0" stroke="#a0a0a0"/><rect x="269.5" y="116.5" width="6" height="6" fill="#e0e0e0" stroke="#a0a0a0"/><rect x="263.5" y="110.5" width="6" height="12" fill="#808080" stroke="#000" stroke-width="1.3"/><path d="M263.5,116.5 L269.5,116.5" stroke="#000"/><rect x="14" y="136" width="1" height="3" fill="#a9a6a0"/>
<rect x="16" y="136" width="1" height="3" fill="#a9a6a0"/>
<rect x="18" y="136" width="1" height="3" fill="#a9a6a0"/>
<rect x="20" y="136" width="1" height="3" fill="#a9a6a0"/>
<rect x="22" y="136" width="1" height="3" fill="#a9a6a0"/>
<rect x="24" y="136" width="1" height="3" fill="#a9a6a0"/>
<rect x="26" y="136" width="1" height="3" fill="#a9a6a0"/>
<rect x="28" y="136" width="1" height="3" fill="#a9a6a0"/>
<rect x="30" y="136" width="1" height="3" fill="#a9a6a0"/>
<rect x="32" y="136" width="1" height="3" fill="#a9a6a0"/>
<rect x="34" y="136" width="1" height="3" fill="#a9a6a0"/>
<rect x="36" y="136" width="1" height="3" fill="#a9a6a0"/>
<rect x="38" y="136" width="1" height="3" fill="#a9a6a0"/>
<rect x="40" y="136" width="1" height="3" fill="#a9a6a0"/>
<rect x="42" y="136" width="1" height="3" fill="#a9a6a0"/>
<rect x="44" y="136" width="1" height="3" fill="#a9a6a0"/>
<rect x="46" y="136" width="1" height="3" fill="#a9a6a0"/>
<rect x="48" y="136" width="1" height="3" fill="#a9a6a0"/>
<rect x="50" y="136" width="1" height="3" fill="#a9a6a0"/>
<circle cx="16" cy="152.8" r="2" fill="#000"/><path d="M13.5,156.5 L17.5,156.5 L17.5,162.5 L19,162.5 L19,164 L13,164 L13,162.5 L14.5,162.5 L14.5,158 L13.5,158 Z" fill="#000"/>
<path d="M39.5,156.3 L43.5,151.7 L49.5,151.7 L54.5,156.3 L49.5,160.7 L43.5,160.7 Z" fill="#fff" stroke="#8c8200" stroke-width="1.2"/><circle cx="46.5" cy="156.3" r="2.8" fill="#00e8f0"/><path d="M45,156.3 L48,156.3 M46.5,154.8 L46.5,157.8" stroke="#000" stroke-width="1.3"/>
<rect x="15" y="186" width="8" height="8" fill="#007000"/><rect x="12" y="184" width="8" height="7.5" fill="#800000"/><rect x="9" y="182" width="8" height="8" fill="#000090"/>
<path d="M24.0,197.39999999999998 L29.200000000000003,197.39999999999998 L26.6,200.5 Z" fill="#000"/>
<path d="M40,183 L40,195.5 L54,195.5" fill="none" stroke="#000" stroke-width="1.4" stroke-dasharray="1.2,0.8"/><path d="M41.5,184 L38.5,184 M41.5,186 L38.5,186 M41.5,188 L38.5,188 M41.5,190 L38.5,190 M41.5,192 L38.5,192 M42,194 L42,197 M44,194 L44,197 M46,194 L46,197 M48,194 L48,197 M50,194 L50,197 M52,194 L52,197" stroke="#000" stroke-width="0.9"/>
<path d="M43.5,189.5 L48.5,189.5 M46,187 L46,192" stroke="#000" stroke-width="1.3"/>
<text x="47" y="187" font-family="Liberation Mono" font-weight="bold" font-size="6.5" fill="#000">90</text>
<rect x="7" y="209" width="50" height="1" fill="#d8d5cf"/><rect x="7" y="210" width="50" height="1" fill="#fff"/>
<rect x="7" y="569" width="50" height="1" fill="#d8d5cf"/><rect x="7" y="570" width="50" height="1" fill="#fff"/>
<rect x="7" y="737" width="50" height="1" fill="#d8d5cf"/><rect x="7" y="738" width="50" height="1" fill="#fff"/>
<path d="M9,228.5 L22.5,228.5 M15.7,221.5 L15.7,235.5" stroke="#000" stroke-width="1.6"/><path d="M8,228.5 L11,225.8 L11,231.2 Z M23.5,228.5 L20.5,225.8 L20.5,231.2 Z M15.7,220.5 L13,223.5 L18.4,223.5 Z M15.7,236.5 L13,233.5 L18.4,233.5 Z" fill="#000"/>
<circle cx="42.5" cy="224.8" r="1.7" fill="none" stroke="#000" stroke-width="1"/><path d="M42.5,226.5 L42.5,230.5 M39.5,228 L45.5,228 M42.5,230.5 L40.0,235 M42.5,230.5 L45.0,235" stroke="#000" stroke-width="1.1" fill="none"/>
<circle cx="51.5" cy="224.8" r="1.7" fill="none" stroke="#000" stroke-width="1"/><path d="M51.5,226.5 L51.5,230.5 M48.5,228 L54.5,228 M51.5,230.5 L49.0,235 M51.5,230.5 L54.0,235" stroke="#000" stroke-width="1.1" fill="none"/>
<path d="M14,256 L9.5,256 L9.5,267 L14,267 M9.5,261.5 L13,261.5 M17.5,256 L22,256 L22,267 L17.5,267 M22,261.5 L18.5,261.5" fill="none" stroke="#000" stroke-width="1.3"/><path d="M15.7,253.5 L15.7,269" stroke="#000" stroke-width="1" stroke-dasharray="1,1"/>
<rect x="39" y="261" width="12" height="3" fill="#808080"/><rect x="43" y="257" width="3.5" height="12" fill="#000"/><path d="M46,254.5 Q52,254 53.5,262" fill="none" stroke="#000" stroke-width="1.1"/><path d="M44.5,254.5 L47.5,252.5 L47.5,256.5 Z" fill="#000"/>
<rect x="9.3" y="286.5" width="13.5" height="13" fill="none" stroke="#000" stroke-width="1.3" stroke-dasharray="2,1.5"/>
<path d="M41,299 L48,292 M47.5,292.5 Q46,289 49,287.5 L50.5,287 L49,289.5 L51,291 L53.5,289.5 Q53.5,293 50.5,294" fill="none" stroke="#505050" stroke-width="2.4" stroke-linecap="round"/><path d="M41.5,298.5 L47,293" stroke="#909090" stroke-width="1"/>
<path d="M14,325 L23.5,318.5 M14.5,326 L24,325" stroke="#000" stroke-width="1.6"/><circle cx="11.5" cy="327" r="2.3" fill="none" stroke="#000" stroke-width="1.2"/><circle cx="13.5" cy="330.5" r="2.3" fill="none" stroke="#000" stroke-width="1.2"/>
<path d="M43,319 L51,327" stroke="#000" stroke-width="2.6"/><path d="M43.3,319.3 L50.7,326.7" stroke="#b0b0b0" stroke-width="0.9"/><path d="M50,326 L54,330 L53,331.5 L43,331.5 L50,328 Z" fill="#ffff00"/><path d="M51,327 L54.5,330" stroke="#000" stroke-width="1"/>
<path d="M9.5,350 L21,362 M21.5,350 L14,358" stroke="#000" stroke-width="2"/><path d="M9.5,362 L13,358.5" stroke="#000" stroke-width="2.6" stroke-linecap="round"/>
<path d="M44,351.5 L47.5,351.5 Q52,351.5 52,356 Q52,360.5 47.5,360.5 L44,360.5 Z M41,353.5 L44,353.5 M41,356 L44,356 M41,358.5 L44,358.5 M52,356 L54.5,356" fill="none" stroke="#8c0000" stroke-width="1.1"/>
<path d="M47,356.5 L47,364.5 L49,362.5 L50.5,365.5 L52,365 L50.5,362 L53,362 Z" fill="#000"/>
<path d="M54.699999999999996,365.2 L59.9,365.2 L57.3,368.3 Z" fill="#000"/>
<path d="M11,383 L11,388 M11,390 L11,395 M9.5,384.5 L11,383 L12.5,384.5 M9.5,393.5 L11,395 L12.5,393.5" fill="none" stroke="#000" stroke-width="1.1"/>
<path d="M14.5,383 L18,383 Q22.5,384 23.5,389 Q22.5,394 18,395 L14.5,395 M14.5,386 L17.5,386 M14.5,392 L17.5,392" fill="none" stroke="#8c0000" stroke-width="1.3"/>
<rect x="41.5" y="386" width="3" height="6" fill="none" stroke="#000" stroke-width="1.2"/><rect x="50" y="385.5" width="3.5" height="7" fill="none" stroke="#000" stroke-width="1.2"/><path d="M45,389 L49,389" stroke="#000" stroke-width="1"/><circle cx="43" cy="383.5" r="1.5" fill="#008000"/><circle cx="43" cy="394.5" r="1.5" fill="#008000"/><circle cx="51.7" cy="382.8" r="1.8" fill="#008000"/><circle cx="51.7" cy="395.2" r="1.8" fill="#008000"/>
<path d="M54.699999999999996,396.5 L59.9,396.5 L57.3,399.6 Z" fill="#000"/>
<path d="M12.5,420 L12.5,417 Q12.5,414 15.5,414 Q18.5,414 18.5,417 L18.5,420" fill="none" stroke="#808080" stroke-width="2"/><rect x="10" y="419.5" width="11" height="8" fill="#909090" stroke="#000" stroke-width="0.8"/><path d="M15.5,421 L15.5,426 M14,422.5 L15.5,421 L17,422.5" stroke="#000" stroke-width="1.2" fill="none"/>
<text x="16.3" y="451.5" font-family="Liberation Sans" font-weight="bold" font-size="7" text-anchor="middle" fill="#000">R2</text>
<path d="M9.3,453.5 L23.3,453.5" stroke="#8c0000" stroke-width="1"/><rect x="13.3" y="452" width="6" height="3" fill="#fff" stroke="#8c0000" stroke-width="1"/>
<text x="16.3" y="461" font-family="Liberation Sans" font-weight="bold" font-size="7" text-anchor="middle" fill="#909090">10k</text>
<text x="47" y="451.5" font-family="Liberation Sans" font-weight="bold" font-size="7" text-anchor="middle" fill="#909090">R2</text>
<path d="M40,453.5 L54,453.5" stroke="#8c0000" stroke-width="1"/><rect x="44" y="452" width="6" height="3" fill="#fff" stroke="#8c0000" stroke-width="1"/>
<text x="47" y="461" font-family="Liberation Sans" font-weight="bold" font-size="7" text-anchor="middle" fill="#000">10k</text>
<path d="M54.699999999999996,461.2 L59.9,461.2 L57.3,464.3 Z" fill="#000"/>
<rect x="10" y="482" width="11" height="7" fill="#fff" stroke="#000" stroke-width="1.3"/><path d="M17,479 L17,481 M19,479 L19,481 M15,479 L15,481 M15,489.5 L15,492 M17,489.5 L17,492 M19,489.5 L19,492" stroke="#000" stroke-width="1"/><path d="M12,485.5 L19,485.5" stroke="#808080" stroke-width="1" stroke-dasharray="1,1"/><path d="M9.5,484 L9.5,487" stroke="#000" stroke-width="1.5"/>
<path d="M42,491.5 L42,484 Q43,480 47,479.5 L53.5,479.5" fill="none" stroke="#000" stroke-width="2.2"/><path d="M42,480 L46,480 L42,484 Z" fill="#909090"/>
<path d="M10,523.5 L12,512 L22.5,510.5" fill="none" stroke="#000" stroke-width="2.2"/><path d="M12.5,521 L21.5,512" stroke="#909090" stroke-width="2"/>
<path d="M41,523 L53,511" stroke="#000" stroke-width="2.2" stroke-linecap="round"/><path d="M48.5,521 L53.5,521 M51,518.5 L51,523.5" stroke="#000" stroke-width="1.3"/>
<path d="M10,543.5 L16,543.5" stroke="#0000ff" stroke-width="1.8"/><path d="M16,543.5 L16,549.5" stroke="#ff0000" stroke-width="1.8"/><path d="M16,549.5 L22,555" stroke="#808000" stroke-width="1"/><circle cx="10" cy="543.2" r="2" fill="#008000"/><circle cx="22" cy="555" r="2.2" fill="#008000"/><rect x="15" y="542" width="2" height="2" fill="#008000"/>
<path d="M41,543 L53,555" stroke="#808000" stroke-width="1.1"/><path d="M44,543 L47,543 L47,549 L50,549 L50,555" fill="none" stroke="#0000c0" stroke-width="0.8" stroke-dasharray="1,1"/><path d="M47,543 L47,549 M50,549 L50,555" stroke="#a00000" stroke-width="0.8" stroke-dasharray="1,1"/><circle cx="41" cy="543" r="2" fill="#008000"/><circle cx="53" cy="555" r="2.2" fill="#008000"/>
<path d="M10,594.5 L22,583.5" stroke="#000" stroke-width="2.2" stroke-linecap="round"/>
<path d="M42,583.5 L52,583.5 L52,586 M42,583.5 L42,586 M47,583.5 L47,594.5 M45,594.5 L49,594.5" fill="none" stroke="#000" stroke-width="1.9"/>
<circle cx="16" cy="621" r="6" fill="none" stroke="#000" stroke-width="2"/>
<path d="M41,616.5 Q44,613.5 48,614.5 Q53.5,616 53,621.5 Q52.5,625 50,627.5" fill="none" stroke="#000" stroke-width="2"/>
<rect x="9.5" y="647.5" width="13" height="11" fill="url(#chkg)" stroke="#000" stroke-width="1.2"/>
<path d="M40.5,654 L45,650 L46.5,645.5 L52.5,645.5 L52.5,660.5 L40.5,660.5 Z" fill="url(#chkg)" stroke="#000" stroke-width="1.2"/>
<path d="M14,679.5 L19,679.5 L22,682.5 L22,687.5 L19,690.5 L14,690.5 L11,687.5 L11,682.5 Z" fill="#606060" transform="translate(1,1)"/><path d="M13.5,678.5 L18.5,678.5 L22,682 L22,687.5 L18.5,691 L13.5,691 L10,687.5 L10,682 Z" fill="#007800"/><circle cx="16" cy="684.8" r="1.3" fill="#fff"/>
<path d="M40.7,678.6 L53,691.1" stroke="#808000" stroke-width="1.1"/><circle cx="40.7" cy="678.6" r="1.9" fill="#008000"/><circle cx="53" cy="691.1" r="1.9" fill="#008000"/>
<circle cx="15.5" cy="716.3" r="4.2" fill="none" stroke="#000" stroke-width="1.2"/><path d="M9.5,716.3 L21.5,716.3 M15.5,710.3 L15.5,722.3" stroke="#000" stroke-width="0.9"/>
<text x="39.5" y="718" font-family="Liberation Mono" font-weight="bold" font-size="8" fill="#000" textLength="14" lengthAdjust="spacingAndGlyphs">&gt;AT</text><rect x="40.5" y="719.5" width="12.5" height="5" fill="none" stroke="#b00000" stroke-width="1" stroke-dasharray="1,1"/>
<path d="M10,750.5 L22,762.5 M22,750.5 L10,762.5" stroke="#808000" stroke-width="1"/>
<circle cx="10" cy="750.5" r="2" fill="#008000"/>
<circle cx="22" cy="750.5" r="2" fill="#008000"/>
<circle cx="10" cy="762.5" r="2" fill="#008000"/>
<circle cx="22" cy="762.5" r="2" fill="#008000"/>
<circle cx="16" cy="756.5" r="2.2" fill="#008000"/>
<path d="M42,753 L54,753 M42,758 L54,758 M40,763 L48,763" stroke="#0000ff" stroke-width="1.8"/><path d="M45.5,750.5 L45.5,764.5 M50.5,750.5 L50.5,764.5" stroke="#ff0000" stroke-width="1.8"/><circle cx="40.8" cy="753" r="1.9" fill="#008000"/><circle cx="40.8" cy="758" r="1.9" fill="#008000"/><circle cx="50.8" cy="763" r="1.9" fill="#008000"/>
<path d="M30,800 L32.5,802.5 L35,800 M30,803.5 L32.5,806 L35,803.5" fill="none" stroke="#000" stroke-width="1.3"/>
<path d="M1140.5,167 L1148.2,167 L1144.3,163 Z" fill="#000"/><path d="M1140.5,786 L1148,786 L1144.3,790 Z" fill="#000"/><path d="M73.5,798.5 L73.5,806 L69.5,802.3 Z" fill="#000"/><path d="M1128,798.5 L1128,806 L1132,802.3 Z" fill="#000"/>
<path d="M1141,569.5 L1147,569.5 M1141,572 L1147,572 M1141,574.5 L1147,574.5" stroke="#a9a49e" stroke-width="1"/><path d="M303.5,799 L303.5,806 M306,799 L306,806 M308.5,799 L308.5,806" stroke="#a9a49e" stroke-width="1"/>
<path d="M13,824.5 L16,821 L19,824.5 L16,828 Z" fill="#000"/><defs><radialGradient id="ffg" cx="0.45" cy="0.4" r="0.6"><stop offset="0" stop-color="#8fd4f5"/><stop offset="0.6" stop-color="#2a7ac0"/><stop offset="1" stop-color="#1a3a8a"/></radialGradient><radialGradient id="ffo" cx="0.5" cy="0.5" r="0.6"><stop offset="0" stop-color="#f08020"/><stop offset="0.7" stop-color="#e85a10"/><stop offset="1" stop-color="#c84010"/></radialGradient><radialGradient id="sun" cx="0.4" cy="0.35" r="0.7"><stop offset="0" stop-color="#ffc070"/><stop offset="1" stop-color="#e07a10"/></radialGradient><linearGradient id="sky" x1="0" y1="0" x2="0" y2="1"><stop offset="0" stop-color="#40c8ff"/><stop offset="1" stop-color="#0090d8"/></linearGradient><radialGradient id="eyeg" cx="0.45" cy="0.4" r="0.6"><stop offset="0" stop-color="#ffffff"/><stop offset="1" stop-color="#a0a0a0"/></radialGradient></defs>
<circle cx="18" cy="12" r="6" fill="none" stroke="#5e5d59" stroke-width="2.6"/><circle cx="22.5" cy="4.5" r="1.8" fill="#5e5d59"/><circle cx="9.2" cy="12.3" r="1.8" fill="#5e5d59"/><circle cx="22.5" cy="19.7" r="1.8" fill="#5e5d59"/>
<path d="M14,5 L20,7 M12,16 L18,19" stroke="#3c3b37" stroke-width="1.6"/>
<circle cx="268.2" cy="11.7" r="11" fill="url(#ffg)"/>
<path d="M259,3.5 Q257,7 257.3,11 Q256.5,18 262,21.5 Q266,23.5 270.5,23 Q276,22.5 278.8,17.5 Q280.5,13.5 279,9 Q278,5.5 275.5,3.5 Q278,8 276.5,12.5 Q275,17 270.5,17.5 Q266,18 263.5,15 Q262,12.5 263.5,10 Q265,8.5 266.8,8.8 L265.8,6.8 Q263.5,6.3 262.5,5.5 Z" fill="url(#ffo)"/>
<path d="M272,22.5 Q277,21 279,16 Q280,12 279,9" fill="none" stroke="#f0b030" stroke-width="1.6"/>
<circle cx="298.2" cy="6.8" r="3.6" fill="#9cc4f0"/><path d="M292,16.5 Q292,11 298,11 Q304,11 304,16.5 Z" fill="#8ab4e8"/>
<circle cx="307.2" cy="8.3" r="4.4" fill="#6cc830"/><path d="M299,21.5 Q299,13.5 307,13.5 Q315,13.5 315,21.5 Z" fill="#60bc28"/>
<circle cx="338.5" cy="12.2" r="10" fill="url(#sky)"/><circle cx="332" cy="5" r="4" fill="#1aa8ec"/><circle cx="345" cy="19.5" r="4" fill="#1aa8ec"/>
<path d="M342.5,8.2 Q341,6.6 338.4,6.6 Q334.5,6.6 334.5,9.5 Q334.5,11.6 338.5,12.3 Q342.6,13 342.6,15.3 Q342.6,18 338.5,18 Q335.2,18 334,16" fill="none" stroke="#fff" stroke-width="2.3"/>
<circle cx="371.2" cy="11.9" r="8.3" fill="#2e2d2a"/><circle cx="371.2" cy="11.9" r="7" fill="#d8d8d8"/><text x="371.2" y="15.6" font-family="Liberation Sans" font-weight="bold" font-size="11" text-anchor="middle" fill="#222">a</text>
<path d="M395.5,9 L410,5 L414,6 L412.5,14 Q412,18 410.5,20 L396,13 Z" fill="#d8cfc6"/><path d="M395.5,9 L410,5 L413,7 L411,14 L396,10.5 Z" fill="#6e2a28"/><path d="M395.5,8.8 L410,4.8 L413.5,5.8" fill="none" stroke="#d89850" stroke-width="1.3"/>
<path d="M411,6 L415,5.5 L416,11 L412,11 Z" fill="#80b040"/><circle cx="414.3" cy="15" r="3.2" fill="#a01828"/>
<rect x="430" y="0" width="24" height="24" fill="#fff"/><rect x="434" y="3.8" width="15.8" height="15.3" rx="1" fill="#4848e8"/><rect x="437" y="3.8" width="8.5" height="4.2" fill="#a8a8b8"/><rect x="441" y="4.5" width="2" height="3" fill="#4848e8"/><rect x="435.5" y="11" width="12.8" height="7.3" fill="#e89090"/><rect x="435.5" y="11" width="12.8" height="1.5" fill="#fff"/><path d="M435.5,14.5 L448.3,14.5 M435.5,16.7 L448.3,16.7" stroke="#d05050" stroke-width="1"/>
<ellipse cx="659" cy="11.5" rx="6.6" ry="9.5" fill="url(#eyeg)" stroke="#000" stroke-width="1"/>
<ellipse cx="675" cy="11.5" rx="6.6" ry="9.5" fill="url(#eyeg)" stroke="#000" stroke-width="1"/>
<circle cx="662" cy="18" r="2.3" fill="#000"/><circle cx="677.5" cy="18" r="2.3" fill="#000"/>
<path d="M686.5,10 L703,6 L704.5,17.5 L687,17.5 Z" fill="#e8d830"/><path d="M686.5,10.5 L703,6.5" stroke="#fff6a0" stroke-width="1.5"/><rect x="687" y="14.5" width="17.5" height="3" fill="#d4c420"/>
<path d="M711,9 L714,9 M711,11.5 L714,11.5 M711,14 L714,14" stroke="#4a4945" stroke-width="1"/>
<path d="M721,20.5 L737,4.5" stroke="#6b6a66" stroke-width="1.5"/><circle cx="729" cy="12.5" r="3.6" fill="#6b6a66"/>
<path d="M759.5,11.8 L761.8,11.8 M758.5,15.6 L760.5,16.7 M755.8,18.3 L756.9,20.3 M752.0,19.3 L752.0,21.6 M748.2,18.3 L747.1,20.3 M745.5,15.6 L743.5,16.7 M744.5,11.8 L742.2,11.8 M745.5,8.1 L743.5,6.9 M748.2,5.3 L747.1,3.3 M752.0,4.3 L752.0,2.0 M755.8,5.3 L756.9,3.3 M758.5,8.0 L760.5,6.9" stroke="#c88a30" stroke-width="1"/><circle cx="752" cy="11.8" r="8" fill="url(#sun)"/>
<rect x="956.5" y="4.5" width="17" height="12" fill="none" stroke="#6b6a66" stroke-width="1.2"/><path d="M959,7 L970.5,14 L959,14 Z" fill="none" stroke="#6b6a66" stroke-width="1"/><path d="M962,19 L968,19 M965,16.5 L965,19" stroke="#6b6a66" stroke-width="1.5"/>
<path d="M989,9.5 L992,9.5 L996,6 L996,17 L992,13.5 L989,13.5 Z" fill="#6b6a66"/><path d="M998.5,10 L998.5,13 M1002.5,5 L1002.5,19" stroke="#6b6a66" stroke-width="1.2"/>
<rect x="1020.5" y="6.5" width="17" height="11" fill="none" stroke="#6b6a66" stroke-width="1.1"/><path d="M1020.5,6.5 L1029,12.5 L1037.5,6.5 M1020.5,17.5 L1026,12 M1037.5,17.5 L1032,12" fill="none" stroke="#6b6a66" stroke-width="1"/>
<path d="M1056,5 L1066.5,5 Q1069,5 1069,8 L1069,13 Q1069,15.5 1066.5,15.5 L1064,15.5 L1066,19 L1060,15.5 L1056,15.5 Q1054,15.5 1054,13 L1054,8 Q1054,5 1056,5 Z" fill="#6b6a66"/>
<circle cx="1135.8" cy="12" r="9.2" fill="none" stroke="#6b6a66" stroke-width="1.3"/><path d="M1132,7.5 Q1128,10 1129.5,14.5 Q1132,18.5 1136,18.5 Q1140,18.5 1142,14.5 Q1143.5,10 1139.6,7.5 M1135.8,4.5 L1135.8,12" fill="none" stroke="#6b6a66" stroke-width="1.3"/>
<rect x="57.5" y="28.5" width="27" height="16" rx="3" fill="#42413d" stroke="#383733"/>
<path d="M11.5,39.5 L15.5,35.5 L19.5,39.5 M39.5,35.5 L43.5,39.5 L47.5,35.5" fill="none" stroke="#d4d2cc" stroke-width="1.2"/>
<path d="M67.5,33.5 L73.5,39.5 M73.5,33.5 L67.5,39.5" stroke="#d8d6d0" stroke-width="1.5"/>
<rect x="4.5" y="845" width="15.5" height="13.5" fill="#a030b0"/><rect x="4.5" y="845" width="15.5" height="3.5" fill="#6a7030"/><rect x="5.5" y="845.5" width="13.5" height="2.2" fill="#eeead0"/><rect x="7" y="849.5" width="12" height="8" fill="#c868d0"/><rect x="5.5" y="849" width="1.5" height="2" fill="#e0f0e0"/><rect x="5.5" y="853" width="1.5" height="2" fill="#e0f0e0"/>
<path d="M27,849.5 L31,849.5 M27,852.5 L31,852.5 M27,855.5 L31,855.5" stroke="#262523" stroke-width="1"/>
<path d="M46.5,855 L51,846.5 L56,844 L58,847 L55,851 L56,855 L52,853.5 L48,857 Z" fill="#f01010"/>
<circle cx="220.5" cy="851.5" r="4.5" fill="#d0d0d0"/><text x="220.5" y="854.5" font-family="Liberation Sans" font-weight="bold" font-size="7.5" text-anchor="middle" fill="#333">a</text>
<rect x="387" y="844.5" width="14" height="14" fill="#10a020" stroke="#000" stroke-width="1"/><rect x="390" y="846.5" width="7" height="5" fill="#e8e8e8"/><path d="M389,854 L399,854 M389,856 L397,856" stroke="#ffff30" stroke-width="1"/>
<rect x="557" y="847.5" width="16" height="9" fill="#f4f0f0"/><path d="M560,851 L569,851 M560,853.5 L566,853.5" stroke="#c8a8a8" stroke-width="1"/>
<rect x="729" y="843" width="12" height="16" fill="#e8e8e8"/><path d="M731,847 L739,847 M731,849.5 L739,849.5 M731,852 L739,852 M731,854.5 L737,854.5" stroke="#b8b8b8" stroke-width="1"/>
<circle cx="906.5" cy="851.5" r="7" fill="url(#ffg)"/><path d="M900,848 Q898,852 900.5,856 Q903,859 907,859 Q911,859 913,855 Q912,858 908,857 Q904,856 904,852 Q904,849 901.5,847.5 Z" fill="url(#ffo)"/>
<rect x="1072" y="843.5" width="15" height="15" fill="#10a020" stroke="#000" stroke-width="1"/><rect x="1075" y="845.5" width="8" height="5" fill="#e8e8e8"/><path d="M1074,853 L1085,853 M1074,855.5 L1082,855.5" stroke="#ffff30" stroke-width="1"/>
<path d="M1130,843.5 L1147,843.5 L1145,862 L1132,862 Z" fill="#c4c4c4"/><ellipse cx="1138.5" cy="844" rx="8.5" ry="2" fill="#909090"/><path d="M1133,848 L1144,848 M1134,853 L1143,853 M1134,857.5 L1142,857.5" stroke="#f0f0f0" stroke-width="1.5"/></svg>
</body></html>
